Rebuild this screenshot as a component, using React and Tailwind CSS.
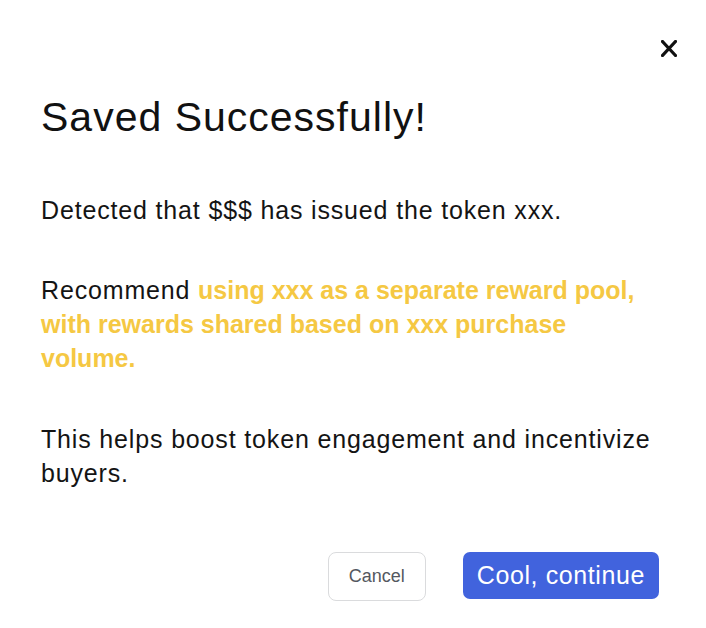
import React from "react";

const CloseIcon = () => (
  <svg width="16" height="17" viewBox="0 0 16 17" fill="none">
    <path d="M1.5 1.5L14.5 15.5M14.5 1.5L1.5 15.5" stroke="#111" strokeWidth="3.2" strokeLinecap="square" />
  </svg>
);

export default function App() {
  return (
    <div
      className="w-[706px] h-[628px] bg-white pl-[41px] pr-[47px] text-[#141414]"
      style={{ fontFamily: '"Liberation Sans", Arial, sans-serif' }}
    >
      {/* Header close */}
      <div className="flex justify-end pt-[40px] -mr-[18px]">
        <button className="flex items-center justify-center">
          <CloseIcon />
        </button>
      </div>

      <h1 className="mt-[36px] text-[41px] leading-[48px] tracking-[1px] font-normal text-[#111]">
        Saved Successfully!
      </h1>

      <div className="text-[25px] leading-[34px] tracking-[0.84px]">
        <p className="mt-[52px]">Detected that $$$ has issued the token xxx.</p>
        <p className="mt-[46px]">
          Recommend{" "}
          <span className="font-bold text-[#f5c843] tracking-normal">
            using xxx as a separate reward pool, with rewards shared based on xxx purchase volume.
          </span>
        </p>
        <p className="mt-[47px]">This helps boost token engagement and incentivize buyers.</p>
      </div>

      <div className="mt-[62px] flex justify-end gap-[37px]">
        <button className="h-[49px] px-[20px] rounded-[8px] border border-[#dadbdd] bg-white text-[18px] text-[#545860]">
          Cancel
        </button>
        <button className="h-[47px] px-[14px] rounded-[7px] bg-[#4163dd] text-white text-[25px] tracking-[0.6px]">
          Cool, continue
        </button>
      </div>
    </div>
  );
}
